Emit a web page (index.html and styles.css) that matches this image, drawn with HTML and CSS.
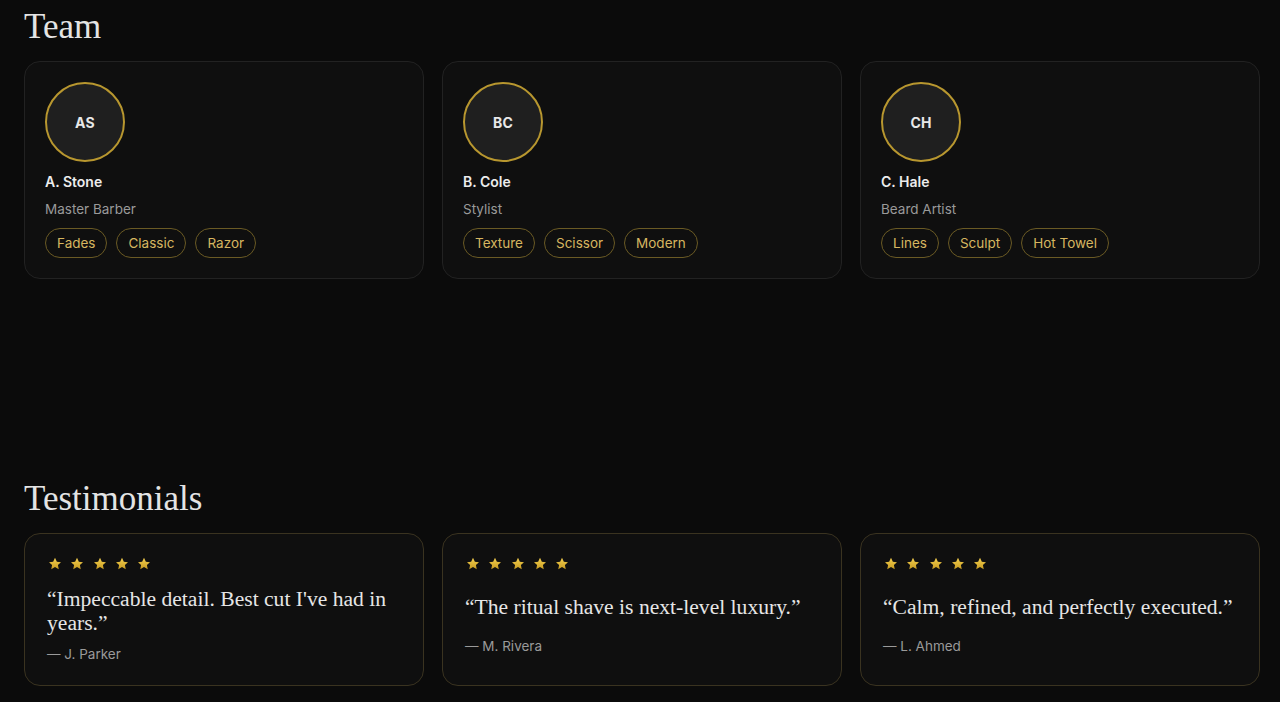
FILE: index.html
```html
<!DOCTYPE html>
<html lang="en">
<head>
<meta charset="utf-8">
<title>Team &amp; Testimonials</title>
<link rel="stylesheet" href="styles.css">
</head>
<body>
<svg width="0" height="0" class="defs" aria-hidden="true">
  <defs>
    <linearGradient id="gold" x1="0" y1="0" x2="0" y2="1">
      <stop offset="0" stop-color="#f3cf4f"/>
      <stop offset="1" stop-color="#c99d22"/>
    </linearGradient>
    <symbol id="star" viewBox="0 0 16 16">
      <path d="M8 1.8 L9.85 5.7 L14 6.2 L10.9 9 L11.75 13.2 L8 11.1 L4.25 13.2 L5.1 9 L2 6.2 L6.15 5.7 Z" fill="url(#gold)"/>
    </symbol>
  </defs>
</svg>
<main class="page">
  <section class="section">
    <h2 class="section-title">Team</h2>
    <div class="grid">
      <article class="card member">
        <div class="avatar">AS</div>
        <h3 class="member-name">A. Stone</h3>
        <p class="member-role">Master Barber</p>
        <ul class="tags">
          <li class="tag">Fades</li>
          <li class="tag">Classic</li>
          <li class="tag">Razor</li>
        </ul>
      </article>
      <article class="card member">
        <div class="avatar">BC</div>
        <h3 class="member-name">B. Cole</h3>
        <p class="member-role">Stylist</p>
        <ul class="tags">
          <li class="tag">Texture</li>
          <li class="tag">Scissor</li>
          <li class="tag">Modern</li>
        </ul>
      </article>
      <article class="card member">
        <div class="avatar">CH</div>
        <h3 class="member-name">C. Hale</h3>
        <p class="member-role">Beard Artist</p>
        <ul class="tags">
          <li class="tag">Lines</li>
          <li class="tag">Sculpt</li>
          <li class="tag">Hot Towel</li>
        </ul>
      </article>
    </div>
  </section>

  <section class="section section-spaced">
    <h2 class="section-title">Testimonials</h2>
    <div class="grid">
      <article class="card review">
        <div class="stars" aria-label="5 stars">
          <svg class="star"><use href="#star"/></svg>
          <svg class="star"><use href="#star"/></svg>
          <svg class="star"><use href="#star"/></svg>
          <svg class="star"><use href="#star"/></svg>
          <svg class="star"><use href="#star"/></svg>
        </div>
        <div class="review-body">
          <blockquote class="quote">“Impeccable detail. Best cut I've had in years.”</blockquote>
          <p class="author">— J. Parker</p>
        </div>
      </article>
      <article class="card review">
        <div class="stars" aria-label="5 stars">
          <svg class="star"><use href="#star"/></svg>
          <svg class="star"><use href="#star"/></svg>
          <svg class="star"><use href="#star"/></svg>
          <svg class="star"><use href="#star"/></svg>
          <svg class="star"><use href="#star"/></svg>
        </div>
        <div class="review-body">
          <blockquote class="quote">“The ritual shave is next-level luxury.”</blockquote>
          <p class="author">— M. Rivera</p>
        </div>
      </article>
      <article class="card review">
        <div class="stars" aria-label="5 stars">
          <svg class="star"><use href="#star"/></svg>
          <svg class="star"><use href="#star"/></svg>
          <svg class="star"><use href="#star"/></svg>
          <svg class="star"><use href="#star"/></svg>
          <svg class="star"><use href="#star"/></svg>
        </div>
        <div class="review-body">
          <blockquote class="quote">“Calm, refined, and perfectly executed.”</blockquote>
          <p class="author">— L. Ahmed</p>
        </div>
      </article>
    </div>
  </section>
</main>
</body>
</html>
```

FILE: styles.css
```css
* { box-sizing: border-box; }

html, body {
  margin: 0;
  padding: 0;
  background: #0b0b0b;
}

body {
  font-family: Inter, "Noto Sans", sans-serif;
  color: #e6e6e6;
  height: 702px;
  overflow: hidden;
}

.defs {
  position: absolute;
  width: 0;
  height: 0;
}

.page {
  padding: 7px 20px 0 24px;
}

.section-title {
  margin: 0 0 14px;
  font-family: "Liberation Serif", "Times New Roman", serif;
  font-weight: 400;
  font-size: 35px;
  line-height: 40px;
  color: #e4e4e4;
}

.section-spaced {
  margin-top: 200px;
}

.grid {
  display: grid;
  grid-template-columns: repeat(3, 400px);
  gap: 18px;
}

.card {
  background: #0f0f0f;
  border: 1px solid #222222;
  border-radius: 16px;
}

/* Team */
.member {
  padding: 20px;
}

.avatar {
  width: 80px;
  height: 80px;
  border-radius: 50%;
  border: 2px solid #b8972f;
  background: #1f1f1f;
  display: flex;
  align-items: center;
  justify-content: center;
  font-size: 14px;
  font-weight: 700;
  color: #e8e8e8;
  letter-spacing: 0.2px;
}

.member-name {
  margin: 10px 0 0;
  font-size: 14px;
  line-height: 20px;
  font-weight: 600;
  color: #ececec;
}

.member-role {
  margin: 7px 0 0;
  font-size: 13.5px;
  line-height: 20px;
  color: #9a9a9a;
}

.tags {
  list-style: none;
  margin: 9px 0 0;
  padding: 0;
  display: flex;
  gap: 9px;
}

.tag {
  border: 1px solid #6a5a24;
  border-radius: 999px;
  padding: 4px 11px;
  font-size: 13.5px;
  line-height: 20px;
  color: #d6b660;
}

/* Testimonials */
.review {
  border-color: #3a3320;
  padding: 22px 22px 20px;
  display: flex;
  flex-direction: column;
}

.stars {
  display: flex;
  gap: 6.3px;
  height: 16px;
}

.star {
  width: 16px;
  height: 16px;
  display: block;
}

.review-body {
  flex: 1;
  display: flex;
  flex-direction: column;
  justify-content: space-evenly;
}

.quote {
  margin: 15px 0 9px;
  font-family: "Liberation Serif", "Times New Roman", serif;
  font-size: 21.6px;
  line-height: 24px;
  color: #e6e6e6;
}

.author {
  margin: 0;
  font-size: 13.5px;
  line-height: 21px;
  color: #9a9a9a;
}
```
